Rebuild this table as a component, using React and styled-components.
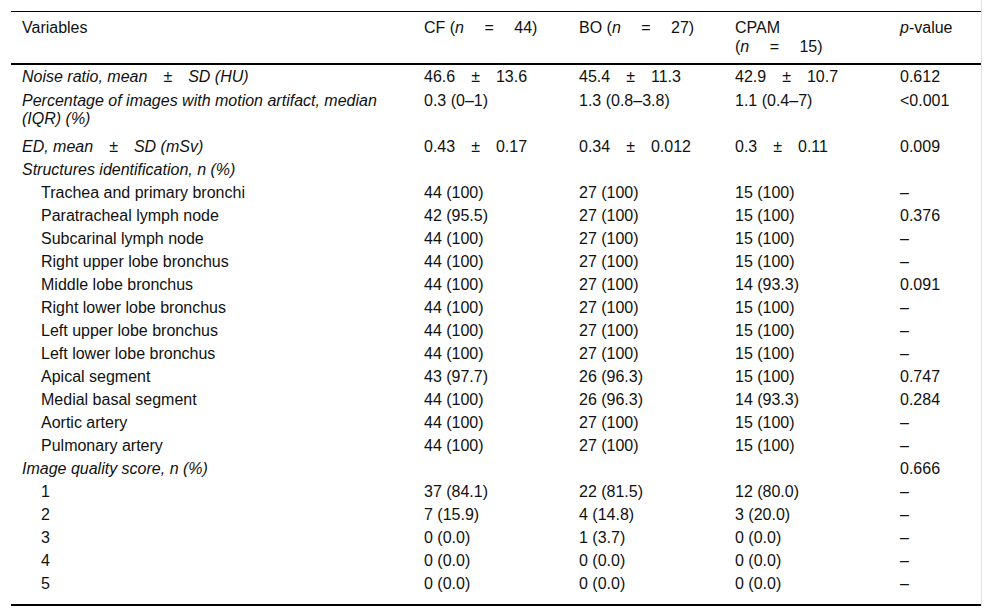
import React from 'react'
import styled, { createGlobalStyle } from 'styled-components'

const GlobalStyle = createGlobalStyle`
	body {
		margin: 0;
		background: #fff;
		font-family: "Liberation Sans", Arial, sans-serif;
		color: #111;
	}
`

const pm = '\u2003±\u2003'
const eq = (v) => (
	<>
		(<I>n</I>{'\u2003 = \u2003'}{v})
	</>
)

const rows = [
	{ label: `Noise ratio, mean${pm}SD (HU)`, head: true, cf: `46.6${pm}13.6`, bo: `45.4${pm}11.3`, cpam: `42.9${pm}10.7`, p: '0.612' },
	{
		label: <>Percentage of images with motion artifact, median<br />(IQR) (%)</>,
		head: true,
		tall: true,
		cf: '0.3 (0–1)',
		bo: '1.3 (0.8–3.8)',
		cpam: '1.1 (0.4–7)',
		p: '<0.001',
	},
	{ label: `ED, mean${pm}SD (mSv)`, head: true, cf: `0.43${pm}0.17`, bo: `0.34${pm}0.012`, cpam: `0.3${pm}0.11`, p: '0.009' },
	{ label: 'Structures identification, n (%)', head: true },
	{ label: 'Trachea and primary bronchi', cf: '44 (100)', bo: '27 (100)', cpam: '15 (100)', p: '–' },
	{ label: 'Paratracheal lymph node', cf: '42 (95.5)', bo: '27 (100)', cpam: '15 (100)', p: '0.376' },
	{ label: 'Subcarinal lymph node', cf: '44 (100)', bo: '27 (100)', cpam: '15 (100)', p: '–' },
	{ label: 'Right upper lobe bronchus', cf: '44 (100)', bo: '27 (100)', cpam: '15 (100)', p: '–' },
	{ label: 'Middle lobe bronchus', cf: '44 (100)', bo: '27 (100)', cpam: '14 (93.3)', p: '0.091' },
	{ label: 'Right lower lobe bronchus', cf: '44 (100)', bo: '27 (100)', cpam: '15 (100)', p: '–' },
	{ label: 'Left upper lobe bronchus', cf: '44 (100)', bo: '27 (100)', cpam: '15 (100)', p: '–' },
	{ label: 'Left lower lobe bronchus', cf: '44 (100)', bo: '27 (100)', cpam: '15 (100)', p: '–' },
	{ label: 'Apical segment', cf: '43 (97.7)', bo: '26 (96.3)', cpam: '15 (100)', p: '0.747' },
	{ label: 'Medial basal segment', cf: '44 (100)', bo: '26 (96.3)', cpam: '14 (93.3)', p: '0.284' },
	{ label: 'Aortic artery', cf: '44 (100)', bo: '27 (100)', cpam: '15 (100)', p: '–' },
	{ label: 'Pulmonary artery', cf: '44 (100)', bo: '27 (100)', cpam: '15 (100)', p: '–' },
	{ label: 'Image quality score, n (%)', head: true, p: '0.666' },
	{ label: '1', cf: '37 (84.1)', bo: '22 (81.5)', cpam: '12 (80.0)', p: '–' },
	{ label: '2', cf: '7 (15.9)', bo: '4 (14.8)', cpam: '3 (20.0)', p: '–' },
	{ label: '3', cf: '0 (0.0)', bo: '1 (3.7)', cpam: '0 (0.0)', p: '–' },
	{ label: '4', cf: '0 (0.0)', bo: '0 (0.0)', cpam: '0 (0.0)', p: '–' },
	{ label: '5', cf: '0 (0.0)', bo: '0 (0.0)', cpam: '0 (0.0)', p: '–' },
]

const App = () => (
	<Frame>
		<GlobalStyle />
		<Table>
			<colgroup>
				<col style={{ width: 403 }} />
				<col style={{ width: 155 }} />
				<col style={{ width: 156 }} />
				<col style={{ width: 165 }} />
				<col style={{ width: 91 }} />
			</colgroup>
			<thead>
				<tr>
					<HeadCell first>Variables</HeadCell>
					<HeadCell>CF {eq(44)}</HeadCell>
					<HeadCell>BO {eq(27)}</HeadCell>
					<HeadCell>CPAM<br />{eq(15)}</HeadCell>
					<HeadCell><I>p</I>-value</HeadCell>
				</tr>
			</thead>
			<tbody>
				{rows.map((row, index) => (
					<Row key={index} tall={row.tall}>
						<LabelCell head={row.head}>{row.label}</LabelCell>
						<Cell>{row.cf}</Cell>
						<Cell>{row.bo}</Cell>
						<Cell>{row.cpam}</Cell>
						<Cell>{row.p}</Cell>
					</Row>
				))}
			</tbody>
		</Table>
	</Frame>
)

export default App

const Frame = styled.div`
	margin-left: 11px;
	width: 970px;
	padding-top: 11px;
	border-right: 1px solid #e2e2e2;
`

const Table = styled.table`
	width: 970px;
	table-layout: fixed;
	border-collapse: collapse;
	font-size: 16px;
	line-height: 18px;
`

const I = styled.i`
	font-style: italic;
`

const HeadCell = styled.th`
	text-align: left;
	vertical-align: top;
	font-weight: normal;
	line-height: 19px;
	padding: 6px 10px 7px ${({ first }) => (first ? '11px' : '10px')};
	border-top: 1px solid #000;
	border-bottom: 2px solid #000;
`

const Row = styled.tr`
	td {
		padding-top: ${({ tall }) => (tall ? '4px' : '3px')};
		padding-bottom: ${({ tall }) => (tall ? '7px' : '2px')};
	}
	&:last-child td {
		padding-bottom: 11px;
		border-bottom: 2px solid #000;
	}
`

const Cell = styled.td`
	vertical-align: top;
	padding-left: 10px;
	padding-right: 10px;
	white-space: nowrap;
`

const LabelCell = styled(Cell)`
	padding-left: ${({ head }) => (head ? '11px' : '30px')};
	font-style: ${({ head }) => (head ? 'italic' : 'normal')};
`
